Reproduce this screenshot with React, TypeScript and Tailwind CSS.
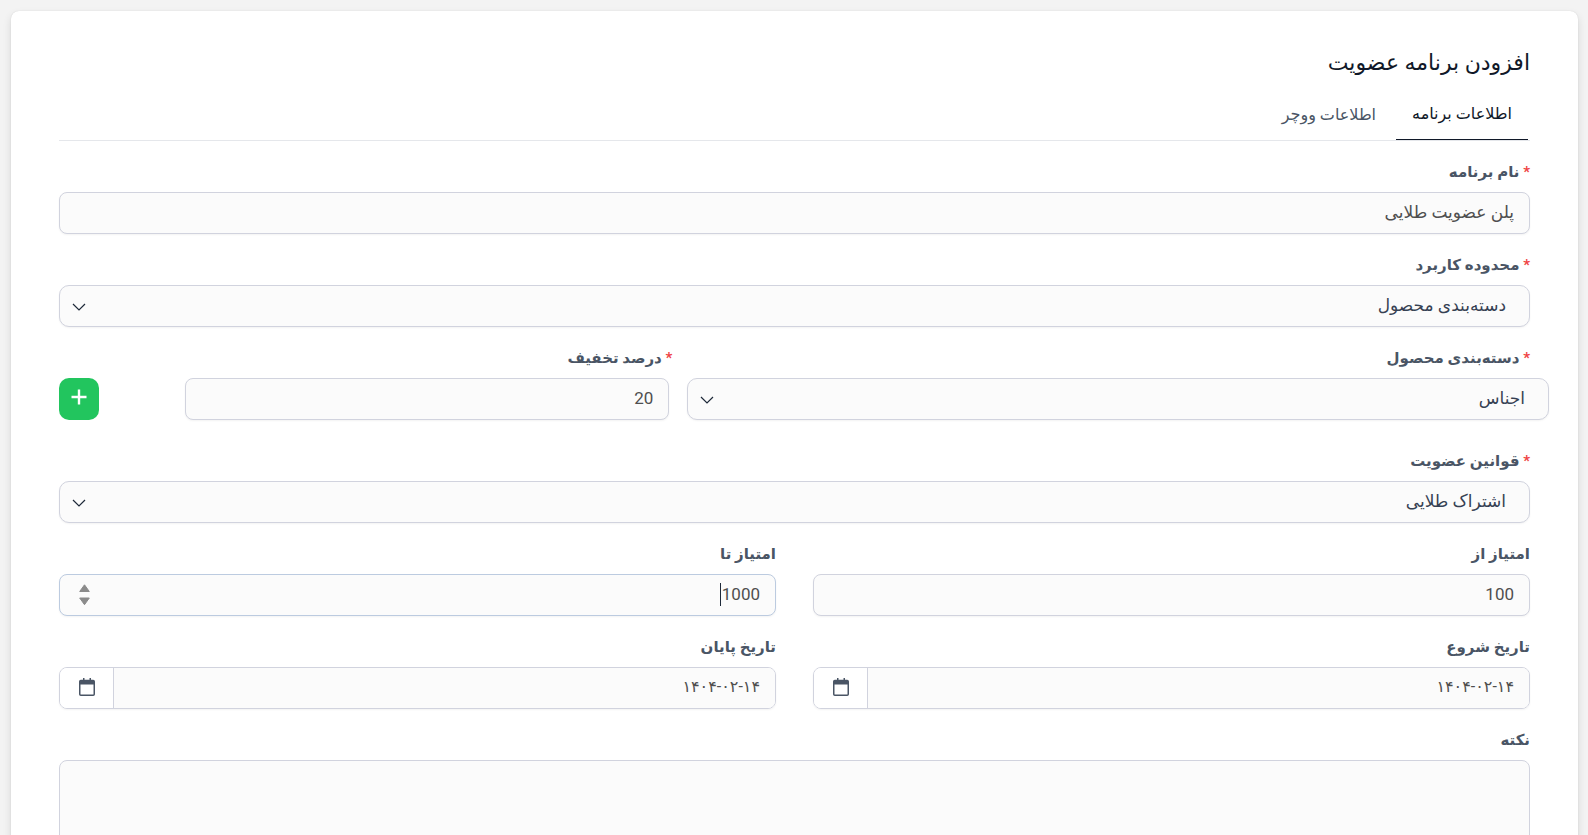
import React from 'react';

const controlBase =
  'block w-full h-[42px] border border-[#d1d3de] bg-[#fbfbfb] shadow-xs outline-none text-[17px] leading-6 pb-[2px]';

interface FieldProps {
  id: string;
  label: string;
  required?: boolean;
  className?: string;
  labelClassName?: string;
  children: React.ReactNode;
}

const Field: React.FC<FieldProps> = ({ id, label, required, className = '', labelClassName = '', children }) => (
  <div className={className}>
    <label htmlFor={id} className={`block mb-2 text-[15px] leading-6 font-bold text-gray-600 ${labelClassName}`}>
      {required && <span className="text-[#ef4444]">* </span>}
      {label}
    </label>
    {children}
  </div>
);

const TextInput: React.FC<React.InputHTMLAttributes<HTMLInputElement>> = (props) => (
  <input {...props} className={`${controlBase} rounded-lg px-[15px] text-[#4f4f4f]`} />
);

interface SelectBoxProps {
  id: string;
  options: string[];
}

const SelectBox: React.FC<SelectBoxProps> = ({ id, options }) => (
  <div className="relative">
    <select id={id} className={`${controlBase} rounded-[10px] appearance-none pr-[23px] pl-10 text-gray-700`}>
      {options.map((option) => (
        <option key={option}>{option}</option>
      ))}
    </select>
    <svg
      className="absolute left-[13px] top-[17px] pointer-events-none text-gray-800"
      width="14"
      height="10"
      viewBox="0 0 14 10"
      fill="none"
      stroke="currentColor"
      strokeWidth="1.2"
    >
      <path d="M1 2l6 6 6-6" />
    </svg>
  </div>
);

const DateInput: React.FC<{ id: string; value: string }> = ({ id, value }) => (
  <div className="flex h-[42px] rounded-lg border border-[#d1d3de] shadow-xs overflow-hidden">
    <input
      id={id}
      type="text"
      defaultValue={value}
      className="flex-1 min-w-0 bg-[#fbfbfb] px-[15px] pb-[2px] text-base leading-6 text-[#4f4f4f] outline-none"
    />
    <button
      type="button"
      aria-label="تقویم"
      className="w-[54px] flex items-center justify-center border-r border-[#d1d3de] bg-white pb-[2px] text-gray-600"
    >
      <svg width="16" height="18" viewBox="0 0 16 18" fill="currentColor">
        <path
          fillRule="evenodd"
          d="M4 0h1.5v1.7h5V0H12v1.7h2.200A1.800 1.800 0 0 1 16 3.500V16.200a1.800 1.800 0 0 1-1.800 1.800H1.800a1.800 1.800 0 0 1-1.800-1.800V3.500A1.800 1.800 0 0 1 1.800 1.700H4zM1.500 6.500V16a.5.5 0 0 0 .5.5h12a.5.5 0 0 0 .5-.5V6.500z"
        />
      </svg>
    </button>
  </div>
);

const App: React.FC = () => {
  return (
    <div dir="rtl" className="min-h-screen bg-[#f3f3f3] pt-[11px] pr-[10px] pl-[11px] font-[Roboto,'DejaVu_Sans',sans-serif]">
      <div className="rounded-t-lg bg-white shadow-[0_4px_8px_rgba(0,0,0,0.12),0_0_1px_rgba(0,0,0,0.16)] px-12 pt-9">
        <h1 className="text-[22px] leading-8 text-gray-900">افزودن برنامه عضویت</h1>

        <div role="tablist" className="mt-3 mb-[19px] flex border-b border-gray-200 px-[2px]">
          <button
            type="button"
            role="tab"
            aria-selected="true"
            className="h-[49px] border-b border-gray-900 px-4 pb-[2px] text-base text-gray-900"
          >
            اطلاعات برنامه
          </button>
          <button
            type="button"
            role="tab"
            aria-selected="false"
            className="h-[49px] px-5 pb-[2px] text-base text-gray-600"
          >
            اطلاعات ووچر
          </button>
        </div>

        <form className="flex flex-col gap-[19px]">
          <Field id="name" label="نام برنامه" required>
            <TextInput id="name" type="text" defaultValue="پلن عضویت طلایی" />
          </Field>

          <Field id="scope" label="محدوده کاربرد" required>
            <SelectBox id="scope" options={['دسته‌بندی محصول']} />
          </Field>

          <div className="-mr-[19px] mb-[10px] grid grid-cols-[861fr_502fr_126px]">
            <Field id="category" label="دسته‌بندی محصول" required labelClassName="pr-[19px]">
              <SelectBox id="category" options={['اجناس']} />
            </Field>
            <Field id="discount" label="درصد تخفیف" required className="pr-[18px]" labelClassName="-mr-[3px]">
              <TextInput id="discount" type="text" defaultValue="20" />
            </Field>
            <div className="flex items-end justify-end">
              <button
                type="button"
                aria-label="افزودن"
                className="flex h-[42px] w-10 items-center justify-center rounded-[10px] bg-[#22c55e] pb-1 text-white"
              >
                <svg width="16" height="16" viewBox="0 0 16 16" stroke="currentColor" strokeWidth="2.400">
                  <path d="M8 .500v15M.500 8h15" />
                </svg>
              </button>
            </div>
          </div>

          <Field id="rules" label="قوانین عضویت" required>
            <SelectBox id="rules" options={['اشتراک طلایی']} />
          </Field>

          <div className="grid grid-cols-2 gap-x-[37px] gap-y-[19px]">
            <Field id="from" label="امتیاز از">
              <TextInput id="from" type="text" defaultValue="100" />
            </Field>
            <Field id="to" label="امتیاز تا">
              <div className="relative">
                <input
                  id="to"
                  type="text"
                  defaultValue="1000"
                  className="block w-full h-[42px] rounded-lg border border-[#bccbe0] bg-[#fbfbfb] px-[15px] pb-[2px] text-[17px] leading-6 text-[#4f4f4f] shadow-xs outline-none"
                />
                <span className="absolute right-[55px] top-[9px] h-[23px] w-px bg-gray-800" />
                <svg
                  className="absolute left-5 top-[10px]"
                  width="11"
                  height="22"
                  viewBox="0 0 11 22"
                  fill="#8b8b8b"
                  stroke="#8b8b8b"
                  strokeWidth="1"
                  strokeLinejoin="round"
                >
                  <path d="M5.500 .800l4.800 6.700H.700zM5.500 20.700L.700 14h9.600z" />
                </svg>
              </div>
            </Field>
            <Field id="start" label="تاریخ شروع">
              <DateInput id="start" value="۱۴۰۴-۰۲-۱۴" />
            </Field>
            <Field id="end" label="تاریخ پایان">
              <DateInput id="end" value="۱۴۰۴-۰۲-۱۴" />
            </Field>
          </div>

          <Field id="note" label="نکته">
            <textarea
              id="note"
              rows={5}
              className="block w-full resize-none rounded-lg border border-[#d1d3de] bg-[#fbfbfb] px-4 py-2 outline-none"
            />
          </Field>
        </form>
      </div>
    </div>
  );
};

export default App;
